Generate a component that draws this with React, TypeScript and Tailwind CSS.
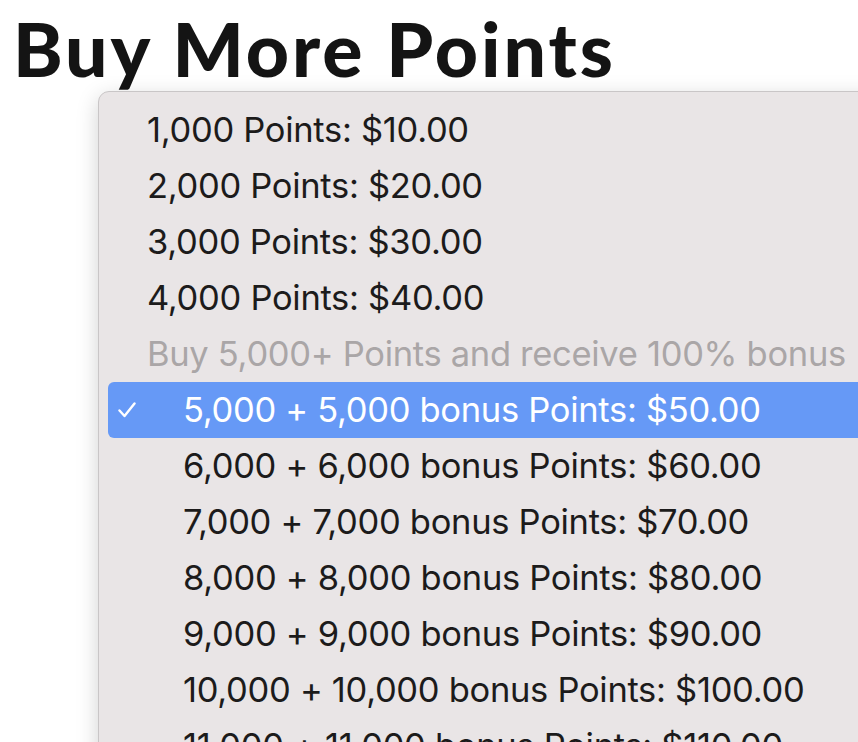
import React from "react";

const items: { label: string; indent?: boolean; disabled?: boolean; selected?: boolean }[] = [
  { label: "1,000 Points: $10.00" },
  { label: "2,000 Points: $20.00" },
  { label: "3,000 Points: $30.00" },
  { label: "4,000 Points: $40.00" },
  { label: "Buy 5,000+ Points and receive 100% bonus", disabled: true },
  { label: "5,000 + 5,000 bonus Points: $50.00", indent: true, selected: true },
  { label: "6,000 + 6,000 bonus Points: $60.00", indent: true },
  { label: "7,000 + 7,000 bonus Points: $70.00", indent: true },
  { label: "8,000 + 8,000 bonus Points: $80.00", indent: true },
  { label: "9,000 + 9,000 bonus Points: $90.00", indent: true },
  { label: "10,000 + 10,000 bonus Points: $100.00", indent: true },
  { label: "11,000 + 11,000 bonus Points: $110.00", indent: true },
];

export default function App() {
  return (
    <div className="w-[858px] h-[742px] overflow-hidden bg-white relative">
      <h1
        className="absolute left-[13px] top-[11px] text-[75px] leading-none font-black tracking-[3px] text-[#141414] whitespace-nowrap"
        style={{ fontFamily: "Lato, 'Noto Sans', sans-serif" }}
      >
        Buy More Points
      </h1>
      <div
        className="absolute left-[98px] top-[91px] w-[800px] h-[700px] bg-[#e9e5e6] rounded-[11px] border border-[#c9c6c7] shadow-[0_6px_22px_rgba(0,0,0,0.18)] px-[9px] pt-[10px]"
        style={{ fontFamily: "Inter, 'Noto Sans', sans-serif" }}
      >
        {items.map((it, i) => (
          <div
            key={i}
            className={`h-[56px] flex items-center rounded-[6px] whitespace-nowrap text-[34.5px] tracking-[-0.3px] ${
              it.selected ? "bg-[#6699f6] text-white" : it.disabled ? "text-[#aaa6a7]" : "text-[#1c1b1b]"
            } ${it.indent ? "pl-[75px]" : "pl-[39px]"} relative`}
          >
            {it.selected && (
              <svg className="absolute left-[10px] top-[20px]" width="18" height="16" viewBox="0 0 18 16">
                <path d="M1.5 8.5 L6.5 14 L16.5 1.5" fill="none" stroke="white" strokeWidth="2.4" strokeLinecap="round" strokeLinejoin="round" />
              </svg>
            )}
            {it.label}
          </div>
        ))}
      </div>
    </div>
  );
}
